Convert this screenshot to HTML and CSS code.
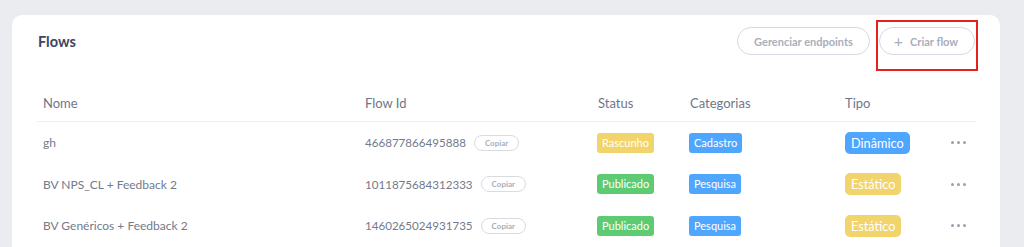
FILE: index.html
```html
<!DOCTYPE html>
<html lang="pt-BR">
<head>
<meta charset="utf-8">
<title>Flows</title>
<link rel="stylesheet" href="styles.css">
</head>
<body>
<div class="page">
  <section class="card">
    <header class="card-head">
      <h1 class="title">Flows</h1>
      <div class="actions">
        <button class="btn btn-endpoints">Gerenciar endpoints</button>
        <div class="highlight-wrap">
          <button class="btn btn-create"><span class="plus">+</span>Criar flow</button>
          <span class="highlight"></span>
        </div>
      </div>
    </header>
    <div class="table">
      <div class="row head">
        <div class="cell">Nome</div>
        <div class="cell">Flow Id</div>
        <div class="cell">Status</div>
        <div class="cell">Categorias</div>
        <div class="cell">Tipo</div>
        <div class="cell"></div>
      </div>
      <div class="row">
        <div class="cell">gh</div>
        <div class="cell id"><span class="num">466877866495888</span><button class="copy">Copiar</button></div>
        <div class="cell"><span class="tag yellow">Rascunho</span></div>
        <div class="cell"><span class="tag blue">Cadastro</span></div>
        <div class="cell"><span class="type blue">Dinâmico</span></div>
        <div class="cell more"><span></span><span></span><span></span></div>
      </div>
      <div class="row">
        <div class="cell">BV NPS_CL + Feedback 2</div>
        <div class="cell id"><span class="num">1011875684312333</span><button class="copy">Copiar</button></div>
        <div class="cell"><span class="tag green">Publicado</span></div>
        <div class="cell"><span class="tag blue">Pesquisa</span></div>
        <div class="cell"><span class="type yellow">Estático</span></div>
        <div class="cell more"><span></span><span></span><span></span></div>
      </div>
      <div class="row">
        <div class="cell">BV Genéricos + Feedback 2</div>
        <div class="cell id"><span class="num">1460265024931735</span><button class="copy">Copiar</button></div>
        <div class="cell"><span class="tag green">Publicado</span></div>
        <div class="cell"><span class="tag blue">Pesquisa</span></div>
        <div class="cell"><span class="type yellow">Estático</span></div>
        <div class="cell more"><span></span><span></span><span></span></div>
      </div>
    </div>
  </section>
</div>
</body>
</html>
```

FILE: styles.css
```css
* { box-sizing: border-box; }
html, body { margin: 0; padding: 0; height: 247px; }
body {
  background: #ebecf0;
  font-family: "Lato", "Open Sans", sans-serif;
  overflow: hidden;
}
.page {
  height: 247px;
  overflow: hidden;
  padding: 15px 24px 0 12px;
}
.card {
  background: #ffffff;
  border-radius: 10px;
  padding: 12px 24px 20px 25px;
  min-height: 260px;
}
.card-head {
  display: flex;
  align-items: center;
  justify-content: space-between;
  height: 28px;
}
.title {
  margin: 0 0 0 1px;
  font-size: 14.5px;
  font-weight: 700;
  color: #3d4461;
}
.actions {
  display: flex;
  gap: 9px;
  margin-right: 1px;
}
.btn {
  height: 28px;
  border: 1px solid #d6d9e1;
  border-radius: 14px;
  background: #fff;
  color: #a9aebb;
  font-family: inherit;
  font-size: 11px;
  font-weight: 700;
  padding: 0;
  display: flex;
  align-items: center;
  justify-content: center;
}
.btn-endpoints { width: 133px; }
.btn-create { width: 96px; padding-right: 2px; }
.btn .plus {
  font-size: 16px;
  font-weight: 400;
  margin-right: 7px;
  line-height: 1;
}
.highlight-wrap {
  position: relative;
}
.highlight {
  position: absolute;
  left: -3px;
  top: -7px;
  width: 102px;
  height: 51px;
  border: 2px solid #e3221f;
  pointer-events: none;
}
.table {
  margin-top: 29px;
}
.row {
  display: grid;
  grid-template-columns: 322px 233px 92px 155px 106px 1fr;
  align-items: center;
  height: 41.5px;
  font-size: 12px;
  color: #737a8c;
}
.row.head {
  height: 38px;
  font-size: 13px;
  color: #6f7689;
  border-bottom: 1px solid #eff0f4;
}
.cell {
  padding-left: 6px;
  white-space: nowrap;
}
.id {
  display: flex;
  align-items: center;
  gap: 8px;
}
.num {
  font-size: 11.6px;
}
.copy {
  height: 16px;
  padding: 0 10px;
  border: 1px solid #d8dbe2;
  border-radius: 8px;
  background: #fff;
  color: #a9aeba;
  font-family: inherit;
  font-size: 8px;
  font-weight: 700;
  line-height: 14px;
}
.tag {
  display: inline-block;
  height: 20px;
  line-height: 20px;
  padding: 0 5px;
  border-radius: 3px;
  color: #fff;
  font-size: 11px;
  margin-left: -1px;
}
.type {
  display: inline-block;
  height: 22px;
  line-height: 22px;
  padding: 0 6px;
  border-radius: 5px;
  color: #fff;
  font-size: 12.7px;
}
.yellow { background: #f1d46b; }
.green { background: #5ccb72; }
.blue { background: #4fa6ff; }
.more {
  display: flex;
  gap: 3px;
  padding-left: 6px;
}
.more span {
  width: 3px;
  height: 3px;
  border-radius: 50%;
  background: #9aa0ad;
}
```
